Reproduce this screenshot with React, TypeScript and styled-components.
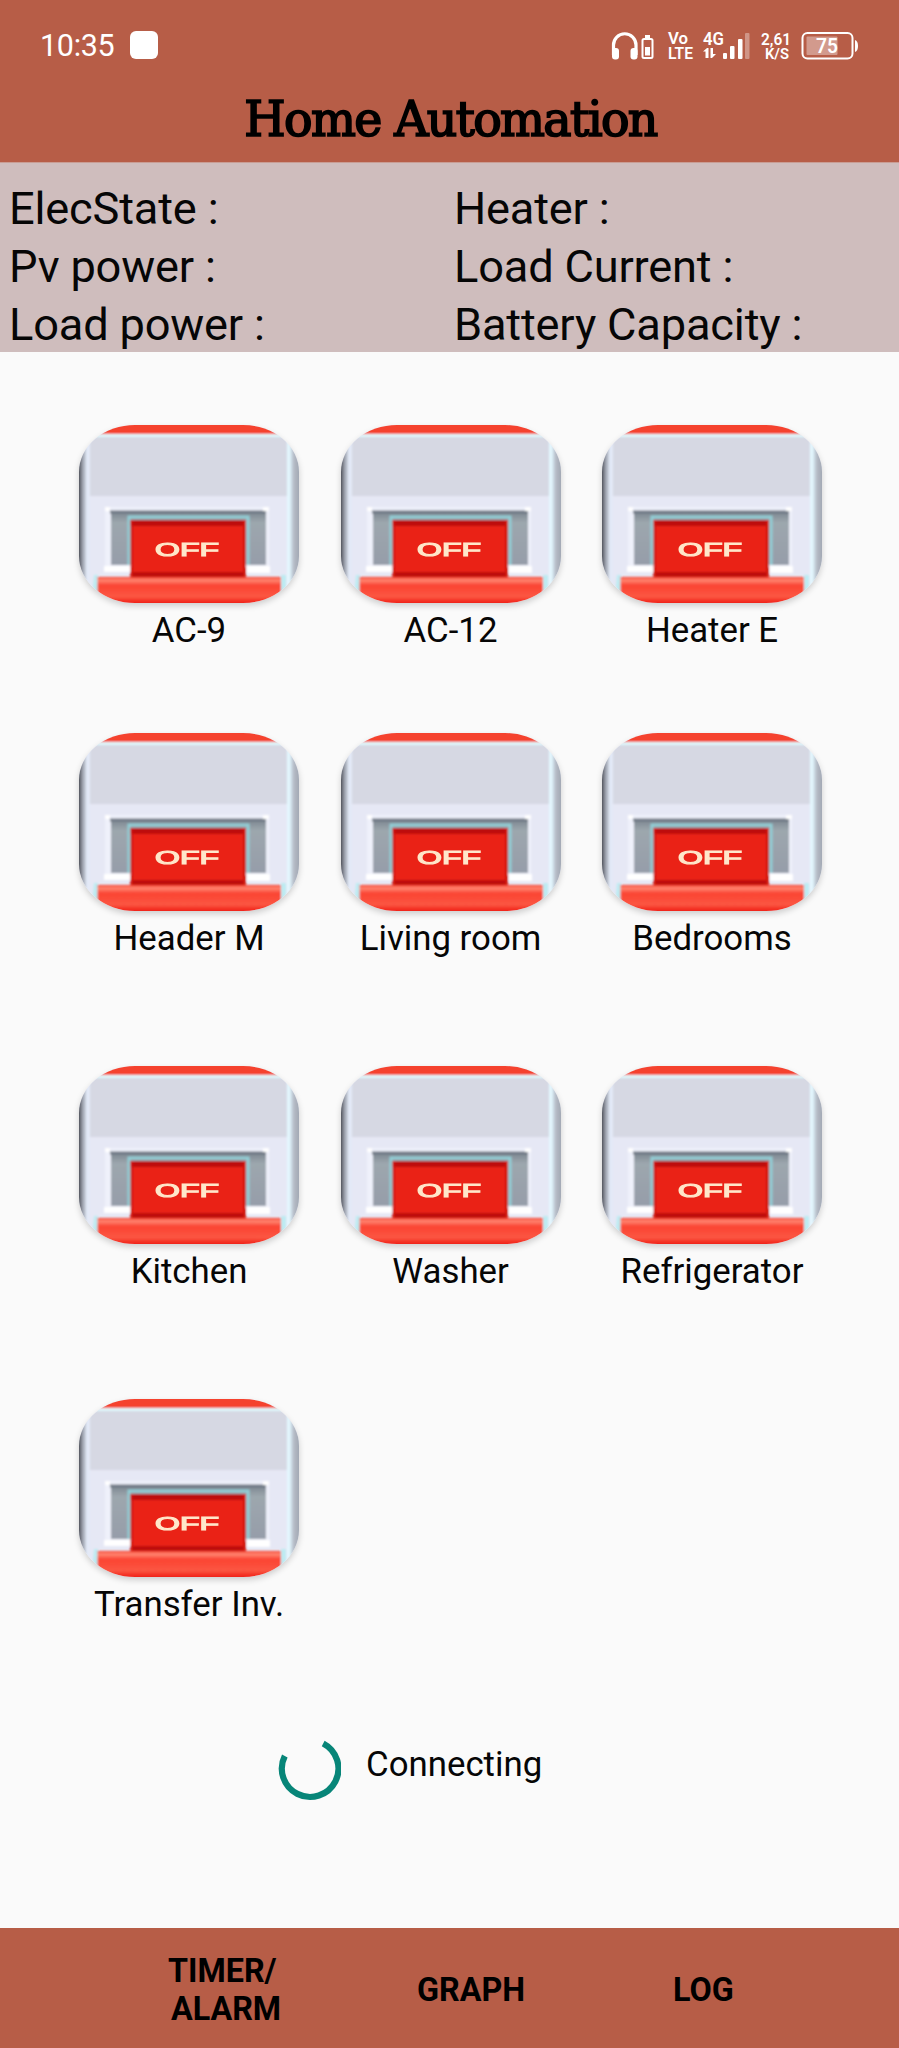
import React from "react";
import styled, { createGlobalStyle } from "styled-components";

const GlobalStyle = createGlobalStyle`
  body { margin: 0; background: #fafafa; }
  * { box-sizing: border-box; }
`;

const Screen = styled.main`
  width: 899px;
  height: 2048px;
  display: flex;
  flex-direction: column;
  background: #fafafa;
  color: #060606;
  font-family: Roboto, "Liberation Sans", sans-serif;
  overflow: hidden;
`;

const Header = styled.header`
  flex: none;
  height: 162px;
  background: #b75d47;
`;

const StatusBar = styled.div`
  height: 86px;
  padding: 5px 40px 0 40px;
  display: flex;
  align-items: center;
  justify-content: space-between;
  color: #fff;
`;

const Clock = styled.div`
  display: flex;
  align-items: center;
  gap: 16px;
  font-size: 30.5px;
  letter-spacing: -0.3px;
  line-height: 36px;

  span { padding-top: 1px; }
`;

const Notice = styled.i`
  width: 28px;
  height: 28px;
  margin-bottom: 1px;
  border-radius: 6px;
  background: #fff;
`;

const StatusIcons = styled.svg`
  display: block;
  width: 248px;
  height: 36px;
  margin-top: 2px;
`;

const Title = styled.h1`
  margin: 0;
  height: 68px;
  line-height: 67px;
  padding-left: 2px;
  text-align: center;
  color: #000;
  font-family: "DejaVu Serif Condensed", "DejaVu Serif", serif;
  font-stretch: condensed;
  font-size: 49px;
  font-weight: 400;
  letter-spacing: -1.5px;
  -webkit-text-stroke: 1.7px #000;
  transform: scaleX(1.075);
  white-space: nowrap;
`;

const Readings = styled.section`
  flex: none;
  height: 190px;
  padding: 16.5px 9px 0;
  display: grid;
  grid-template-columns: 445px 1fr;
  grid-auto-rows: 58.3px;
  background: #cfbdbd;
  border-top: 1px solid #c99d94;
  font-size: 45.2px;
  letter-spacing: -0.18px;
  line-height: 58.3px;
  white-space: nowrap;
`;

const Switches = styled.section`
  flex: none;
  padding: 73px 76px 0 79px;
  display: grid;
  grid-template-columns: repeat(3, 220px);
  column-gap: 41.5px;
  grid-template-rows: 308px 333px 333px 333px;
`;

const SwitchButton = styled.button`
  border: 0;
  padding: 0;
  margin: 0;
  background: none;
  font: inherit;
  color: inherit;
  display: flex;
  flex-direction: column;
  align-items: center;
`;

const SwitchArt = styled.svg`
  display: block;
  width: 220px;
  height: 178px;
  border-radius: 56px / 47px;
  box-shadow: 0 3px 6px rgba(0, 0, 0, 0.18);
`;

const Label = styled.span`
  font-size: 34.8px;
  line-height: 40px;
  margin-top: 7px;
  white-space: nowrap;
`;

const Progress = styled.div`
  flex: none;
  height: 66px;
  margin: 6px 0 0 278px;
  display: flex;
  align-items: flex-start;
  gap: 25px;
  font-size: 34.8px;
  line-height: 40px;

  span { padding-top: 6px; }
`;

const Spinner = styled.svg`
  width: 63px;
  height: 63px;
  margin-top: 1px;
`;

const Footer = styled.nav`
  margin-top: auto;
  height: 120px;
  padding-top: 3px;
  background: #b75d47;
  display: grid;
  grid-template-columns: 345px 252px 1fr;
  align-items: center;
`;

const Tab = styled.button<{ $inset?: number }>`
  border: 0;
  padding: 0 0 0 ${(p) => p.$inset ?? 0}px;
  background: none;
  color: #000;
  font-family: inherit;
  font-size: 32.3px;
  font-weight: 700;
  line-height: 38px;
  text-align: left;
  white-space: pre;
`;

const SecondLine = styled.span`
  display: block;
  padding-left: 3px;
`;

const readings = ["ElecState :", "Heater :", "Pv power :", "Load Current :", "Load power :", "Battery Capacity :"];
const switches = ["AC-9", "AC-12", "Heater E", "Header M", "Living room", "Bedrooms", "Kitchen", "Washer", "Refrigerator", "Transfer Inv."];

function SystemIcons() {
  return (
    <StatusIcons viewBox="0 -2 248 36" fill="#fff" fontFamily="Roboto, sans-serif" fontWeight="600">
      <path d="M2.5 24V14A11.2 11.2 0 0 1 25 14V24" fill="none" stroke="#fff" strokeWidth="3.2" />
      <rect x="1" y="17" width="7" height="11.5" rx="3" />
      <rect x="19.5" y="17" width="7" height="11.5" rx="3" />
      <rect x="34" y="4" width="5" height="3" />
      <rect x="31.5" y="8" width="10" height="19" rx="1.5" fill="none" stroke="#fff" strokeWidth="2" />
      <rect x="34" y="16" width="5" height="8.5" />
      <text x="57" y="13" fontSize="16" textLength="20" lengthAdjust="spacingAndGlyphs">Vo</text>
      <text x="57" y="28" fontSize="16" textLength="25" lengthAdjust="spacingAndGlyphs">LTE</text>
      <text x="92" y="14" fontSize="18" textLength="21" lengthAdjust="spacingAndGlyphs">4G</text>
      <path d="M92 20.5L96 17H97.5V27H94.5V20.5ZM99.5 17H102V23H105L101 27H99.5Z" />
      <rect x="112" y="22" width="4" height="6" rx="1" />
      <rect x="119" y="15" width="4.5" height="13" rx="1" />
      <rect x="127" y="8" width="4.5" height="20" rx="1" />
      <rect x="134" y="2" width="4.5" height="26" rx="1" opacity=".35" />
      <text x="150" y="14" fontSize="17" textLength="30" lengthAdjust="spacingAndGlyphs">2,61</text>
      <text x="154" y="28" fontSize="15" textLength="24" lengthAdjust="spacingAndGlyphs">K/S</text>
      <rect x="191.5" y="2" width="50" height="25.5" rx="5" fill="none" stroke="#fff" strokeWidth="2" />
      <rect x="195.5" y="5.5" width="31" height="18.5" rx="1" opacity=".38" />
      <path d="M244 9Q247 10 247 15Q247 20 244 21Z" />
      <text x="205" y="22" fontSize="20" textLength="22" lengthAdjust="spacingAndGlyphs">75</text>
    </StatusIcons>
  );
}

function Breaker() {
  return (
    <SwitchArt viewBox="0 0 220 178" preserveAspectRatio="none" aria-hidden="true">
      <defs>
        <linearGradient id="left"><stop stopColor="#16181c" /><stop offset=".25" stopColor="#5b5f68" /><stop offset=".6" stopColor="#a3a8b4" /><stop offset="1" stopColor="#d9e1ec" /></linearGradient>
        <linearGradient id="right"><stop stopColor="#dceef7" /><stop offset=".3" stopColor="#b4bac5" /><stop offset="1" stopColor="#979da8" /></linearGradient>
        <linearGradient id="well" x2="0" y2="1"><stop stopColor="#7d8791" /><stop offset=".2" stopColor="#9da7ae" /><stop offset="1" stopColor="#969da9" /></linearGradient>
        <linearGradient id="base" x2="0" y2="1"><stop stopColor="#f62b19" /><stop offset=".1" stopColor="#ff8a76" /><stop offset=".3" stopColor="#fb4431" /><stop offset=".7" stopColor="#fb5643" /><stop offset="1" stopColor="#ed1109" /></linearGradient>
        <filter id="soft" x="-10%" y="-10%" width="120%" height="120%"><feGaussianBlur stdDeviation=".8" /></filter>
        <filter id="lettering" x="-10%" y="-20%" width="120%" height="140%"><feGaussianBlur stdDeviation=".5" /></filter>
      </defs>
      <rect width="220" height="178" fill="#e6e8f5" />
      <g filter="url(#soft)">
        <rect x="6" y="10" width="204" height="61" fill="#d6d8e3" />
        <rect x="-2" y="10" width="10" height="170" fill="url(#left)" />
        <rect x="211" y="10" width="13" height="170" fill="url(#right)" />
        <rect x="7" y="14" width="4" height="160" fill="#e3e9f7" />
        <rect x="208" y="14" width="3" height="160" fill="#e4f8ff" />
        <rect x="-4" y="-4" width="228" height="13" fill="#f5432d" />
        <rect x="0" y="9" width="220" height="3" fill="#dff8fc" />
        <path d="M26 82H190V142H26Z" fill="#eff1fb" />
        <rect x="32" y="87" width="155" height="53" fill="url(#well)" />
        <rect x="31" y="85.5" width="156" height="3" fill="#6e7884" />
        <path d="M50 140V92H169V140" fill="none" stroke="#91ced6" strokeWidth="3" />
        <path d="M25 141H51V147H25ZM168 141H191V148H168Z" fill="#fff" />
        <path d="M26 82H31V86H26ZM184 82H190V86H184Z" fill="#fff" />
        <path d="M15 150H19V172H13ZM202 150H207V170H202Z" fill="#bdebf2" />
        <rect x="18.5" y="152" width="183.5" height="28" fill="url(#base)" />
        <rect x="52" y="95" width="115" height="57" fill="#ea2113" />
        <path d="M51.5 95H167V101H51.5ZM51.5 147H167V152H51.5Z" fill="#bd1009" />
        <path d="M51.5 95H54V152H51.5ZM164 95H167V152H164Z" fill="#d0150d" />
      </g>
      <g filter="url(#lettering)">
        <text x="76" y="131" fontFamily="Liberation Sans, sans-serif" fontSize="18" textLength="64" lengthAdjust="spacingAndGlyphs" fill="#ffe7ca" stroke="#ffe7ca" strokeWidth="1.1">OFF</text>
      </g>
    </SwitchArt>
  );
}

export default function App() {
  return (
    <>
      <GlobalStyle />
      <Screen>
        <Header>
          <StatusBar>
            <Clock><span>10:35</span><Notice /></Clock>
            <SystemIcons />
          </StatusBar>
          <Title>Home Automation</Title>
        </Header>
        <Readings>{readings.map((r) => <span key={r}>{r}</span>)}</Readings>
        <Switches>
          {switches.map((name) => (
            <SwitchButton key={name}><Breaker /><Label>{name}</Label></SwitchButton>
          ))}
        </Switches>
        <Progress>
          <Spinner viewBox="0 0 63 63"><path d="M45.2 4.5A28.3 28.3 0 1 1 6.8 17" fill="none" stroke="#078578" strokeWidth="6.2" /></Spinner>
          <span>Connecting</span>
        </Progress>
        <Footer>
          <Tab $inset={168}>TIMER/<SecondLine>ALARM</SecondLine></Tab>
          <Tab $inset={72}>GRAPH</Tab>
          <Tab $inset={76}>LOG</Tab>
        </Footer>
      </Screen>
    </>
  );
}
